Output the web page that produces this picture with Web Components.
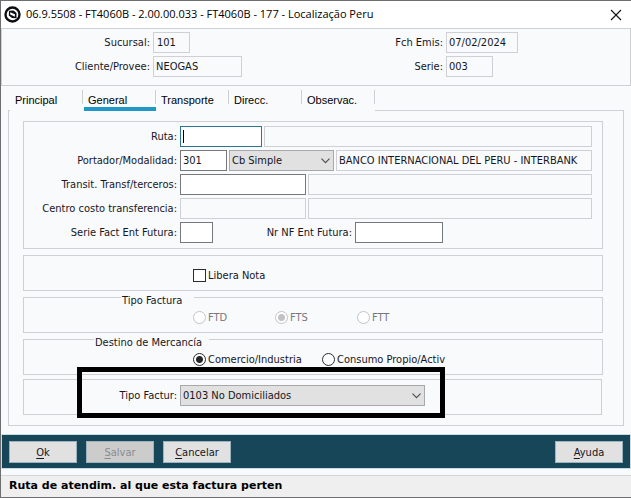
<!DOCTYPE html>
<html lang="es">
<head>
<meta charset="utf-8">
<title>Localização Peru</title>
<style>
  html { height: 100%; }
  body {
    margin: 0; min-height: 100%; display: flex; flex-direction: column;
    --surface: #f9fafc; --line: #cfd0d3; --ink: #16161c;
    --ui: "DejaVu Sans Condensed", "DejaVu Sans", sans-serif;
    font: 11px/13px var(--ui); color: var(--ink); background: var(--surface);
  }
</style>
</head>
<body>
<app-window heading="06.9.5508 - FT4060B - 2.00.00.033 - FT4060B - 177 - Localização Peru">
  <header-panel slot="header">
    <form-row slot="left"><form-field label="Sucursal" value="101" size="37" labelw="148" kind="flat" inset></form-field></form-row>
    <form-row slot="left"><form-field label="Cliente/Provee" value="NEOGAS" size="89" labelw="148" kind="flat"></form-field></form-row>
    <form-row slot="right"><form-field label="Fch Emis" value="07/02/2024" size="72" labelw="127" kind="flat"></form-field></form-row>
    <form-row slot="right"><form-field label="Serie" value="003" size="47" labelw="127" kind="flat"></form-field></form-row>
  </header-panel>
  <tab-view tabs="Principal,General,Transporte,Direcc.,Observac." active="1">
    <group-box>
      <form-row><form-field label="Ruta" size="82" labelw="153" kind="active"></form-field><form-field name="Descripción de ruta" kind="flat" grow></form-field></form-row>
      <form-row><form-field label="Portador/Modalidad" value="301" size="47" labelw="153"></form-field><form-select name="Modalidad" value="Cb Simple" size="105"></form-select><form-field name="Banco" value="BANCO INTERNACIONAL DEL PERU - INTERBANK" kind="flat" grow></form-field></form-row>
      <form-row><form-field label="Transit. Transf/terceros" size="126" labelw="153"></form-field><form-field name="Descripción transitoria" kind="flat" grow></form-field></form-row>
      <form-row><form-field label="Centro costo transferencia" size="126" labelw="153" kind="flat"></form-field><form-field name="Descripción centro costo" kind="flat" grow></form-field></form-row>
      <form-row><form-field label="Serie Fact Ent Futura" size="33" labelw="153"></form-field><form-field label="Nr NF Ent Futura" size="88" labelw="137"></form-field></form-row>
    </group-box>
    <choice-group type="checkbox" options="Libera Nota" name="libera"></choice-group>
    <choice-group type="radio" legend="Tipo Factura" style="--indent:97px;--legend:73px;--step:82px" options="FTD,FTS,FTT" checked="1" name="tipo" disabled></choice-group>
    <choice-group type="radio" legend="Destino de Mercancía" style="--indent:70px;--legend:115px;--step:129px" options="Comercio/Industria,Consumo Propio/Activ" checked="0" name="destino"></choice-group>
    <group-box highlighted>
      <form-row><form-select label="Tipo Factur" value="0103 No Domiciliados" size="245" labelw="153"></form-select></form-row>
    </group-box>
  </tab-view>
  <action-bar slot="footer">
    <action-button>Ok</action-button>
    <action-button disabled>Salvar</action-button>
    <action-button>Cancelar</action-button>
    <action-button slot="end">Ayuda</action-button>
  </action-bar>
  <status-bar slot="footer">Ruta de atendim. al que esta factura perten</status-bar>
</app-window>

<script>
const BASE = '<style>*{box-sizing:border-box}:host{box-sizing:border-box}input,select,button{font:inherit;color:inherit;margin:0;border-radius:0}</style>';
function define(name, render) {
  customElements.define(name, class extends HTMLElement {
    connectedCallback() {
      if (this.shadowRoot) return;
      const t = document.createElement('template');
      t.innerHTML = BASE + render(this);
      this.attachShadow({ mode: 'open' }).append(t.content.cloneNode(true));
    }
  });
}

define('app-window', el => `<style>
  :host { display: flex; flex-direction: column; flex: 1; border: 1px solid #6e6e70; border-right-width: 0; }
  header { display: flex; align-items: center; min-height: 27px; padding: 0 9px 0 3px; background: #fff; }
  h1 { flex: 1; margin: 0 0 2px 5px; font: 11px/17px "Open Sans", "Noto Sans", sans-serif; color: #000; white-space: nowrap; }
  svg { display: block; flex: none; }
  button { border: 0; padding: 0; background: none; }
  main { display: contents; }
</style>
<header>
  <svg width="17" height="17" viewBox="0 0 17 17" aria-hidden="true"><circle cx="8.500" cy="8.500" r="7" fill="#fff" stroke="#0c0d10" stroke-width="2.400"/><path d="M5 4.700L9.500 4.500L12.500 7V12.300L8 12L4.800 9.500Z" fill="#0c0d10"/><path d="M6.200 6.300L10.900 8.200V10.800L6.200 8.600Z" fill="#fff"/></svg>
  <h1>${el.getAttribute('heading')}</h1>
  <button aria-label="Cerrar"><svg width="12" height="12" viewBox="0 0 12 12"><path d="M1 1L11 11M11 1L1 11" fill="none" stroke="#111" stroke-width="1.100"/></svg></button>
</header>
<slot name="header"></slot><main><slot></slot></main><slot name="footer"></slot>`);

define('header-panel', () => `<style>
  :host { display: grid; grid-template-columns: 1fr 1fr; border: 1px solid var(--line); padding: 3px 0 8px; }
  div { display: grid; gap: 3px; }
</style><div><slot name="left"></slot></div><div><slot name="right"></slot></div>`);

define('form-row', () => `<style>:host { display: flex; gap: 2px; min-height: 21px; }</style><slot></slot>`);

const labelHTML = el => el.hasAttribute('label')
  ? `<label for="c" style="width:${el.getAttribute('labelw')}px">${el.getAttribute('label')}:</label>` : '';
const FIELD = `
  :host { display: flex; align-items: center; gap: 3px; }
  :host([grow]) { flex: 1; min-width: 0; }
  label { text-align: right; white-space: nowrap; }`;

define('form-field', el => `<style>${FIELD}
  input { height: 21px; width: 100%; padding: 0 2px; border: 1px solid #77787b; background: #fff; outline: 0; }
  :host([kind=flat]) input { border-color: var(--line); background: var(--surface); }
  :host([kind=active]) input { border-color: #2b7590; background: linear-gradient(#000, #000) 2px 3px / 1px 13px no-repeat #fff; }
  :host([inset]) input { padding-left: 3px; }
</style>${labelHTML(el)}<input id="c" ${el.hasAttribute('label') ? '' : `aria-label="${el.getAttribute('name')}"`} value="${el.getAttribute('value') || ''}" style="${el.hasAttribute('grow') ? '' : `width:${el.getAttribute('size')}px`}" ${el.getAttribute('kind') === 'flat' ? 'readonly' : ''}>`);

define('form-select', el => `<style>${FIELD}
  span { display: grid; align-items: center; }
  select, svg { grid-area: 1 / 1; }
  select { appearance: none; width: 100%; height: 21px; padding: 0 18px 0 2px; border: 1px solid #a9a9ab; background: #e1e1e1; outline: 0; }
  svg { justify-self: end; margin-right: 4px; pointer-events: none; }
</style>${labelHTML(el)}<span style="width:${el.getAttribute('size')}px"><select id="c" ${el.hasAttribute('label') ? '' : `aria-label="${el.getAttribute('name')}"`}><option>${el.getAttribute('value')}</option></select>
<svg width="9" height="6" viewBox="0 0 9 6"><path d="M.5 .7L4.500 4.700L8.500 .7" fill="none" stroke="#505050" stroke-width="1.200"/></svg></span>`);

define('tab-view', el => {
  const active = +el.getAttribute('active');
  return `<style>
  :host { display: block; margin: 0 7px 9px; }
  nav { display: flex; min-height: 25px; padding-top: 4px; }
  i { width: 2px; border-bottom: 1px solid var(--line); }
  i:last-child { flex: 1; }
  button { display: flex; flex-direction: column; width: 73px; padding: 0; border: 0; background: none; text-align: left; font: 11px/15px "Liberation Sans", Arial, sans-serif; color: #000; }
  span { width: 100%; height: 17px; padding: 3px 0 0 5px; background: linear-gradient(var(--line), var(--line)) right top / 1px 14px no-repeat; }
  .on::after { content: ""; align-self: stretch; height: 4px; margin-left: 1px; background: #1f97c7; }
  section { display: grid; gap: 6px; padding: 10px 20px 10px 14px; border: 1px solid var(--line); border-top: 0; }
</style><nav role="tablist"><i></i>${el.getAttribute('tabs').split(',').map((t, n) =>
  `<button role="tab" class="${n === active ? 'on' : ''}" aria-selected="${n === active}"><span>${t}</span></button>`).join('')}<i></i></nav>
<section role="tabpanel"><slot></slot></section>`;
});

define('group-box', el => `<style>
  :host { display: grid; gap: 3px; padding: 4px 10px 5px 0; border: 1px solid var(--line); }
  :host([highlighted]) { position: relative; margin: -2px 1px 0 0; padding: 5px 0 8px; }
  div { position: absolute; left: 53px; top: -13px; width: 368px; height: 51px; border: 5px solid #000; pointer-events: none; }
</style><slot></slot>${el.hasAttribute('highlighted') ? '<div></div>' : ''}`);

define('choice-group', el => {
  const type = el.getAttribute('type'), name = el.getAttribute('name');
  const legend = el.getAttribute('legend'), checked = el.getAttribute('checked');
  return `<style>
  :host { display: block; }
  fieldset { display: flex; min-width: 0; margin: 0; padding: 12px 0 8px 169px; border: 1px solid var(--line); }
  legend { float: none; height: 1px; width: var(--legend); margin-left: calc(var(--indent) - 169px); padding: 0 0 0 1px; line-height: 8px; white-space: nowrap; }
  label { display: flex; align-items: center; gap: 2px; height: 14px; min-width: var(--step); white-space: nowrap; }
  input { appearance: none; flex: none; width: 13px; height: 13px; border: 1px solid #2c2c2e; background: #fff; }
  input[type=radio] { border-radius: 50%; }
  input[type=radio]:checked { background: radial-gradient(circle, #262628 3px, #fff 4px); }
  fieldset:disabled label { color: #77787c; }
  fieldset:disabled input { border-color: #c4c4c6; }
  fieldset:disabled input:checked { background: radial-gradient(circle, #c2c2c4 3px, #fff 4px); }
</style><fieldset ${el.hasAttribute('disabled') ? 'disabled' : ''}>${legend ? `<legend>${legend}</legend>` : ''}${el.getAttribute('options').split(',').map((o, n) =>
  `<label><input type="${type}" name="${name}" ${String(n) === checked ? 'checked' : ''}>${o}</label>`).join('')}</fieldset>`;
});

define('action-bar', () => `<style>
  :host { display: flex; gap: 9px; margin: 0 1px; padding: 6px 7px 5px; background: #184659; outline: 1px solid #c9dbe3; }
  div { flex: 1; }
</style><slot></slot><div></div><slot name="end"></slot>`);

define('action-button', el => {
  const text = el.textContent.trim();
  return `<style>
  :host { display: block; }
  button { display: block; width: 68px; height: 22px; padding: 0; border: 1px solid #9db4bf; background: #e1e1e1; }
  button:disabled { background: #ccc; color: #8b8b8d; }
  u { text-underline-offset: 2px; }
</style><button ${el.hasAttribute('disabled') ? 'disabled' : ''}><u>${text[0]}</u>${text.slice(1)}</button>`;
});

define('status-bar', () => `<style>
  :host { display: block; flex: 1; margin-top: 7px; padding: 3px 8px 4px; border-top: 1px solid #d4d5d7; background: #efefef; font: bold 11px/14px "DejaVu Sans", Verdana, sans-serif; color: #000; }
</style><slot></slot>`);
</script>
</body>
</html>
